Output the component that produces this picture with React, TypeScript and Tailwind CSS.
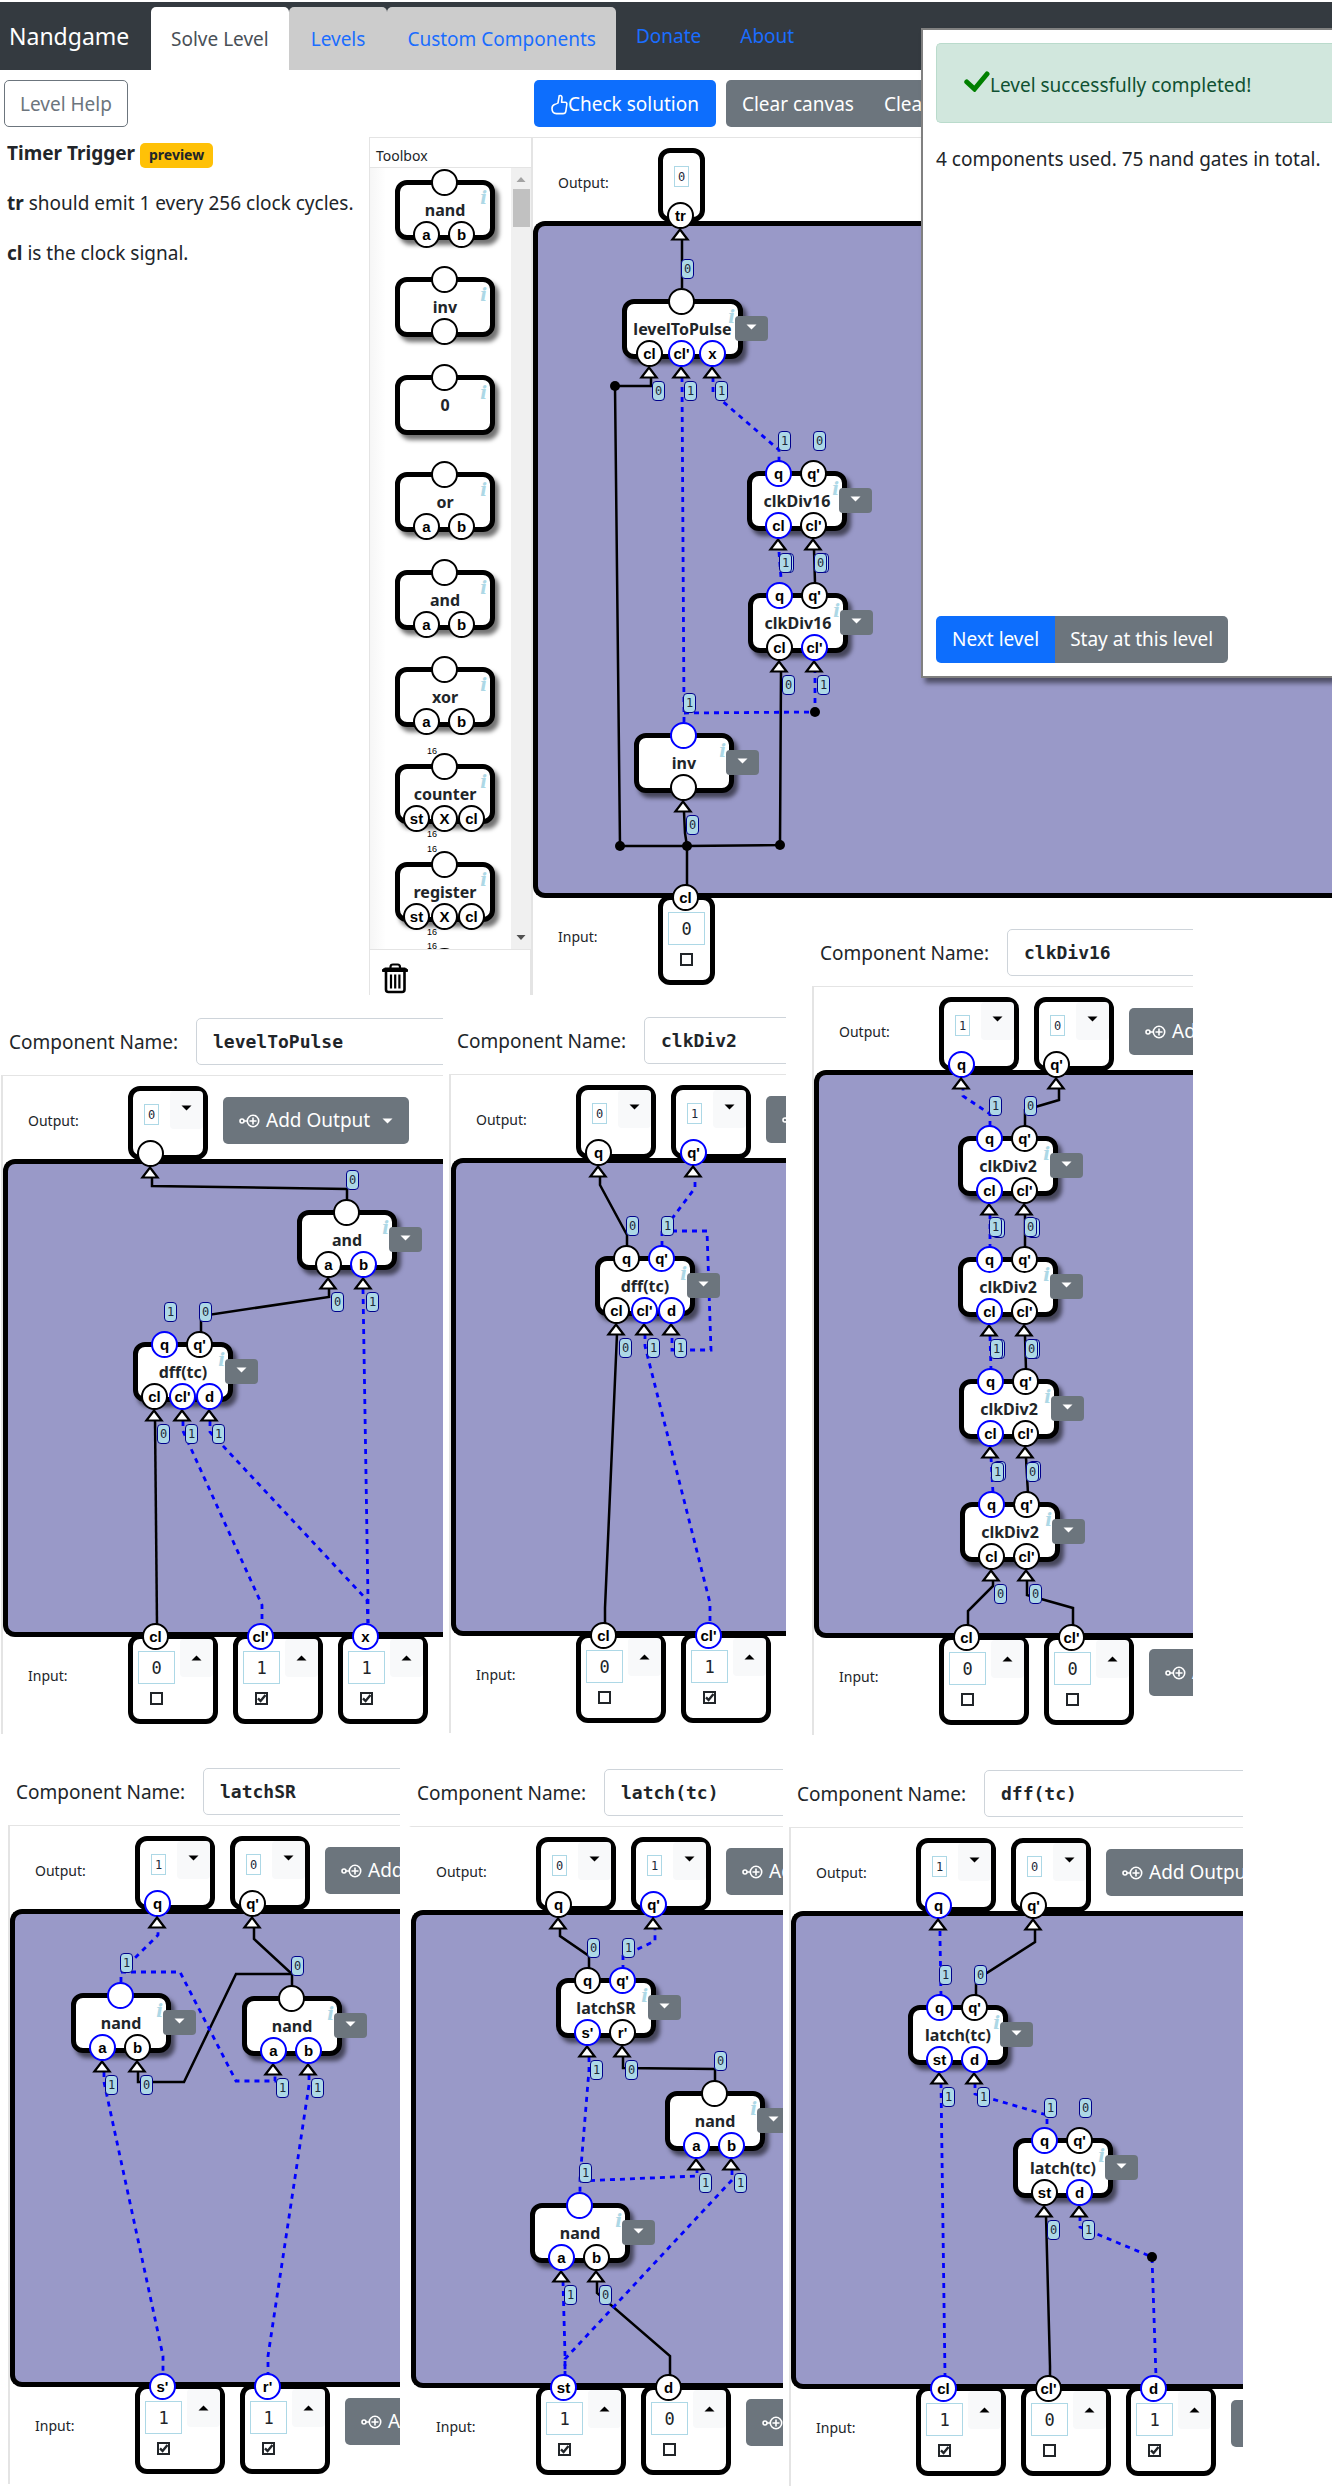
import React from "react";

type Bit = 0 | 1 | null;
type Pin = [label: string, value: Bit];

interface GateData {
  x: number;
  y: number;
  name: string;
  outs: Pin[];
  ins: Pin[];
  wide?: boolean;
}

interface Wire {
  on?: boolean;
  points: string;
}

interface CircuitData {
  gates: GateData[];
  wires: Wire[];
  dots?: [number, number][];
}

interface BoardData extends CircuitData {
  outputs: Pin[];
  inputs: Pin[];
}

const PIN_OFFSETS: Record<number, number[]> = {
  1: [49],
  2: [31, 66],
  3: [21, 49, 76],
};
const WIDE_OFFSETS: Record<number, number[]> = { 1: [59], 3: [27, 59, 90] };

function Caret({ up = false, light = false }: { up?: boolean; light?: boolean }) {
  return (
    <svg width="11" height="6" viewBox="0 0 11 6" aria-hidden="true" className={light ? "text-white" : "text-black"}>
      <path d={up ? "M0.5 5.5H10.5L5.5 0.5Z" : "M0.5 0.5H10.5L5.5 5.5Z"} fill="currentColor" />
    </svg>
  );
}

function PinCircle({ label, on }: { label: string; on: boolean }) {
  return (
    <span
      className={
        "flex size-[27px] items-center justify-center rounded-full border-2 bg-white font-['Liberation_Sans',sans-serif] text-[15px] leading-none font-bold text-black " +
        (on ? "border-[#0000ff]" : "border-black")
      }
    >
      {label}
    </span>
  );
}

function Arrow() {
  return (
    <svg width="20" height="13" viewBox="0 0 20 13" aria-hidden="true">
      <path d="M10 1.5L17.6 11.5H2.4Z" fill="white" stroke="black" strokeWidth="2.2" />
    </svg>
  );
}

function Badge({ value }: { value: Bit }) {
  return (
    <span className="flex h-5 w-[13px] items-center justify-center rounded-[4px] border border-[#00008b] bg-[#add8e6] font-['DejaVu_Sans_Mono',monospace] text-[12px] leading-none text-gray-800">
      {value}
    </span>
  );
}

function Gate({ gate, menu = true, bus = false }: { gate: Omit<GateData, "x" | "y">; menu?: boolean; bus?: boolean }) {
  const table = gate.wide ? WIDE_OFFSETS : PIN_OFFSETS;
  return (
    <div className={"relative h-[60px] shrink-0 " + (gate.wide ? "w-[121px]" : "w-[100px]")}>
      <div className="flex h-full items-center justify-center rounded-[12px] border-[5px] border-black bg-white text-[16px] leading-none font-bold text-[#212529] shadow-[4px_5px_4px_rgba(0,0,0,0.55)]">
        {gate.name}
      </div>
      <span className="absolute top-[9px] right-[8px] font-['DejaVu_Serif',serif] text-[18px] leading-none font-bold text-[#add8e6] italic">
        i
      </span>
      {bus && (
        <>
          <span className="absolute -top-[18px] left-[32px] font-['Liberation_Sans',sans-serif] text-[9px] leading-[10px] text-black">16</span>
          <span className="absolute top-[65px] left-[32px] font-['Liberation_Sans',sans-serif] text-[9px] leading-[10px] text-black">16</span>
        </>
      )}
      {gate.outs.map(([label, value], i) => {
        const cx = table[gate.outs.length][i];
        return (
          <React.Fragment key={"o" + i}>
            <span className="absolute -top-[11px]" style={{ left: cx - 13 }}>
              <PinCircle label={label} on={value === 1} />
            </span>
            {value !== null && (
              <span className="absolute -top-[40px]" style={{ left: cx }}>
                <Badge value={value} />
              </span>
            )}
          </React.Fragment>
        );
      })}
      {gate.ins.map(([label, value], i) => {
        const cx = table[gate.ins.length][i];
        return (
          <React.Fragment key={"i" + i}>
            {value !== null && (
              <>
                <span className="absolute top-[67px]" style={{ left: cx - 10 }}>
                  <Arrow />
                </span>
                <span className="absolute top-[82px]" style={{ left: cx + 3 }}>
                  <Badge value={value} />
                </span>
              </>
            )}
            <span className="absolute top-[41px]" style={{ left: cx - 13 }}>
              <PinCircle label={label} on={value === 1} />
            </span>
          </React.Fragment>
        );
      })}
      {menu && (
        <button
          type="button"
          aria-label={gate.name + " menu"}
          className="absolute top-[17px] -right-[25px] flex h-[25px] w-[33px] items-center justify-center rounded-[4px] bg-[#6c757d] pb-1"
        >
          <Caret light />
        </button>
      )}
    </div>
  );
}

function Circuit({ circuit, height }: { circuit: CircuitData; height: string }) {
  return (
    <div className={"relative rounded-l-[12px] border-[5px] border-r-0 border-black bg-[#9999c8] " + height}>
      <div className="absolute -inset-[5px]">
        <svg className="absolute inset-0 h-full w-full overflow-visible" aria-hidden="true">
          {circuit.wires.map((w) => (
            <polyline
              key={w.points}
              points={w.points}
              fill="none"
              stroke={w.on ? "#0000ff" : "#000000"}
              strokeWidth={w.on ? 2.8 : 2.5}
              strokeDasharray={w.on ? "5 5" : undefined}
            />
          ))}
          {circuit.dots?.map(([cx, cy]) => (
            <circle key={cx + "-" + cy} cx={cx} cy={cy} r="5" fill="#000000" />
          ))}
        </svg>
        {circuit.gates.map((g) => (
          <div key={g.name + g.x + "-" + g.y} className="absolute" style={{ left: g.x, top: g.y }}>
            <Gate gate={g} />
          </div>
        ))}
      </div>
    </div>
  );
}

function AddButton({ text }: { text: string }) {
  return (
    <button
      type="button"
      className="flex h-[47px] shrink-0 items-center rounded-[5px] bg-[#6c757d] px-4 text-[19px] leading-none whitespace-nowrap text-white"
    >
      <svg width="21" height="14" viewBox="0 0 21 14" fill="none" stroke="currentColor" strokeWidth="1.6" aria-hidden="true" className="mr-[6px]">
        <circle cx="3" cy="7" r="2" />
        <path d="M5 7H8.500M14 3.500V10.500M10.500 7H17.500" />
        <circle cx="14" cy="7" r="5.700" />
      </svg>
      {text}
      <span className="ml-3">
        <Caret light />
      </span>
    </button>
  );
}

function OutputBox({ pin, menu }: { pin: Pin; menu: boolean }) {
  const [label, value] = pin;
  return (
    <div
      className={"relative flex h-[74px] shrink-0 items-start rounded-[12px] border-[5px] border-black bg-white " + (menu ? "w-20" : "w-[47px]")}
    >
      <output className="mt-[13px] ml-[11px] flex h-[21px] w-[15px] items-center justify-center border border-[#add8e6] font-['DejaVu_Sans_Mono',monospace] text-[12px] leading-none text-gray-800">
        {value}
      </output>
      {menu && (
        <button type="button" aria-label={"Output " + label + " menu"} className="ml-[11px] flex h-[38px] w-[33px] items-center justify-center rounded-[4px] bg-[#f8f9fa] pb-1">
          <Caret />
        </button>
      )}
      <span className="absolute top-[49px] left-[4px]">
        <PinCircle label={label} on={value === 1} />
      </span>
      <span className="absolute top-[75px] left-[7px]">
        <Arrow />
      </span>
    </div>
  );
}

function InputBox({ pin, menu }: { pin: Pin; menu: boolean }) {
  const [label, value] = pin;
  return (
    <div
      className={"relative flex h-[90px] shrink-0 items-start rounded-[12px] border-[5px] border-black bg-white " + (menu ? "w-[90px]" : "w-[57px]")}
    >
      <div className="ml-[5px] flex w-[37px] flex-col items-center pt-[12px]">
        <input
          aria-label={"Input " + label + " value"}
          defaultValue={String(value)}
          className="h-[33px] w-full border border-[#add8e6] bg-white text-center font-['DejaVu_Sans_Mono',monospace] text-[17px] leading-none text-[#212529]"
        />
        <label className="relative mt-2 size-[13px]">
          <input
            type="checkbox"
            defaultChecked={value === 1}
            aria-label={"Toggle input " + label}
            className="peer block size-[13px] appearance-none border-2 border-[#212529] bg-white"
          />
          <svg viewBox="0 0 13 13" className="pointer-events-none absolute inset-0 hidden size-[13px] peer-checked:block" aria-hidden="true">
            <path d="M3 6.300L5.600 9L10.500 3" fill="none" stroke="#212529" strokeWidth="2.400" />
          </svg>
        </label>
      </div>
      {menu && (
        <button type="button" aria-label={"Input " + label + " menu"} className="ml-[5px] flex h-[38px] w-[33px] items-center justify-center rounded-[4px] bg-[#f8f9fa]">
          <Caret up />
        </button>
      )}
      <span className="absolute -top-[16px] left-[9px]">
        <PinCircle label={label} on={value === 1} />
      </span>
    </div>
  );
}

function Board({ board, height, editable = true, edge = true }: { board: BoardData; height: string; editable?: boolean; edge?: boolean }) {
  return (
    <div className={"overflow-hidden border-t border-l-2 border-t-[#e4e4e4] " + (edge ? "border-l-[#e4e4e4]" : "border-l-white")}>
      <div className="relative z-10 flex h-[83px] items-start pt-[10px]">
        <span className="mt-[25px] w-[125px] shrink-0 pl-[25px] text-[14px] leading-5">Output:</span>
        <div className="flex gap-[15px]">
          {board.outputs.map((p, i) => (
            <OutputBox key={i} pin={p} menu={editable} />
          ))}
          {editable && (
            <div className="mt-[11px]">
              <AddButton text="Add Output" />
            </div>
          )}
        </div>
      </div>
      <Circuit circuit={board} height={height} />
      <div className="relative z-10 -mt-[3px] flex h-[100px] items-start">
        <span className="mt-[32px] w-[125px] shrink-0 pl-[25px] text-[14px] leading-5">Input:</span>
        <div className="flex gap-[15px]">
          {board.inputs.map((p, i) => (
            <InputBox key={i} pin={p} menu={editable} />
          ))}
          {editable && (
            <div className="mt-[14px]">
              <AddButton text="Add Input" />
            </div>
          )}
        </div>
      </div>
    </div>
  );
}

function ComponentCard({
  name,
  board,
  height = "h-[478px]",
  edge,
  className,
}: {
  name: string;
  board: BoardData;
  height?: string;
  edge?: boolean;
  className: string;
}) {
  return (
    <section className={"min-w-0 overflow-hidden pt-px " + className}>
      <div className="mb-[10px] flex h-[47px] items-center">
        <label htmlFor={name} className="w-[195px] shrink-0 pt-px pl-2 text-[19px] whitespace-nowrap">
          Component Name:
        </label>
        <input
          id={name}
          defaultValue={name}
          className="h-[47px] w-[400px] shrink-0 rounded-[5px] border border-[#ced4da] bg-white px-4 font-['DejaVu_Sans_Mono',monospace] text-[18px] font-bold text-[#212529]"
        />
      </div>
      <Board board={board} height={height} edge={edge} />
    </section>
  );
}

const timerBoard: BoardData = {
  outputs: [["tr", 0]],
  inputs: [["cl", 0]],
  gates: [
    { x: 89, y: 78, name: "levelToPulse", wide: true, outs: [["", 0]], ins: [["cl", 0], ["cl'", 1], ["x", 1]] },
    { x: 214, y: 250, name: "clkDiv16", outs: [["q", 1], ["q'", 0]], ins: [["cl", 1], ["cl'", 0]] },
    { x: 215, y: 372, name: "clkDiv16", outs: [["q", 1], ["q'", 0]], ins: [["cl", 0], ["cl'", 1]] },
    { x: 101, y: 512, name: "inv", outs: [["", 1]], ins: [["", 0]] },
  ],
  wires: [
    { points: "149,18 149,67" },
    { points: "118,155 118,165 82,165 87,625 154,625 247,624 248,451" },
    { points: "151,591 152,612 154,625 154,664" },
    { points: "281,328 282,362" },
    { on: true, points: "149,156 151,492 151,502" },
    { on: true, points: "180,156 180,172 246,229 246,243" },
    { on: true, points: "246,331 248,357" },
    { on: true, points: "151,492 282,491 282,451" },
  ],
  dots: [[82, 165], [87, 625], [154, 625], [247, 624], [282, 491]],
};

const levelToPulse: BoardData = {
  outputs: [["", 0]],
  inputs: [["cl", 0], ["cl'", 1], ["x", 1]],
  gates: [
    { x: 294, y: 51, name: "and", outs: [["", 0]], ins: [["a", 0], ["b", 1]] },
    { x: 130, y: 183, name: "dff(tc)", outs: [["q", 1], ["q'", 0]], ins: [["cl", 0], ["cl'", 1], ["d", 1]] },
  ],
  wires: [
    { points: "149,17 149,27 344,30 344,42" },
    { points: "198,177 198,157 326,138 326,128" },
    { points: "152,260 154,466" },
    { on: true, points: "180,262 180,272 259,446 259,464" },
    { on: true, points: "207,262 207,273 364,441 365,464" },
    { on: true, points: "360,130 365,441 365,464" },
  ],
};

const clkDiv2: BoardData = {
  outputs: [["q", 0], ["q'", 1]],
  inputs: [["cl", 0], ["cl'", 1]],
  gates: [{ x: 144, y: 98, name: "dff(tc)", outs: [["q", 0], ["q'", 1]], ins: [["cl", 0], ["cl'", 1], ["d", 1]] }],
  wires: [
    { points: "176,89 176,77 149,27 149,17" },
    { points: "166,176 154,450 154,465" },
    { on: true, points: "211,88 211,74 244,30 244,17" },
    { on: true, points: "211,73 256,73 260,192 221,192 221,177" },
    { on: true, points: "194,176 194,188 259,445 259,465" },
  ],
};

const div2 = (x: number, y: number, low: Bit): GateData => ({
  x,
  y,
  name: "clkDiv2",
  outs: [["q", 1], ["q'", 0]],
  ins: [["cl", low], ["cl'", 0]],
});

const clkDiv16: BoardData = {
  outputs: [["q", 1], ["q'", 0]],
  inputs: [["cl", 0], ["cl'", 0]],
  gates: [div2(144, 66, 1), div2(144, 187, 1), div2(145, 309, 1), div2(146, 432, 0)],
  wires: [
    { on: true, points: "176,56 176,44 149,26 149,17" },
    { points: "211,56 211,40 245,30 245,17" },
    { on: true, points: "176,144 176,178" },
    { points: "211,144 211,178" },
    { on: true, points: "176,266 177,300" },
    { points: "211,266 212,300" },
    { on: true, points: "177,387 179,423" },
    { points: "212,388 214,424" },
    { points: "179,510 179,516 154,541 154,555" },
    { points: "213,510 213,525 259,538 259,555" },
  ],
};

const latchSR: BoardData = {
  outputs: [["q", 1], ["q'", 0]],
  inputs: [["s'", 1], ["r'", 1]],
  gates: [
    { x: 61, y: 84, name: "nand", outs: [["", 1]], ins: [["a", 1], ["b", 0]] },
    { x: 232, y: 87, name: "nand", outs: [["", 0]], ins: [["a", 1], ["b", 1]] },
  ],
  wires: [
    { points: "282,78 282,65 244,30 244,17" },
    { points: "282,65 226,65 174,173 128,173 128,163" },
    { on: true, points: "111,73 111,63 148,26 148,17" },
    { on: true, points: "111,63 170,63 226,172 265,172 265,165" },
    { on: true, points: "94,163 94,173 153,447 153,465" },
    { on: true, points: "299,166 299,176 258,447 258,465" },
  ],
};

const latchTc: BoardData = {
  outputs: [["q", 0], ["q'", 1]],
  inputs: [["st", 1], ["d", 0]],
  gates: [
    { x: 145, y: 68, name: "latchSR", outs: [["q", 0], ["q'", 1]], ins: [["s'", 1], ["r'", 0]] },
    { x: 254, y: 181, name: "nand", outs: [["", 0]], ins: [["a", 1], ["b", 1]] },
    { x: 119, y: 293, name: "nand", outs: [["", 1]], ins: [["a", 1], ["b", 0]] },
  ],
  wires: [
    { points: "178,60 178,46 149,26 149,17" },
    { points: "212,146 212,158 304,159 304,173" },
    { points: "186,371 186,383 259,446 259,466" },
    { on: true, points: "212,60 212,46 244,31 244,17" },
    { on: true, points: "178,147 178,160 169,269 169,284" },
    { on: true, points: "169,271 286,266 286,260" },
    { on: true, points: "152,371 154,445 154,466" },
    { on: true, points: "321,260 321,270 154,449 154,466" },
  ],
};

const dffTc: BoardData = {
  outputs: [["q", 1], ["q'", 0]],
  inputs: [["cl", 1], ["cl'", 0], ["d", 1]],
  gates: [
    { x: 117, y: 94, name: "latch(tc)", outs: [["q", 1], ["q'", 0]], ins: [["st", 1], ["d", 1]] },
    { x: 222, y: 227, name: "latch(tc)", outs: [["q", 1], ["q'", 0]], ins: [["st", 0], ["d", 1]] },
  ],
  wires: [
    { points: "185,85 185,69 244,31 244,17" },
    { points: "255,305 259,455 259,466" },
    { on: true, points: "150,85 149,27 149,17" },
    { on: true, points: "150,172 154,465" },
    { on: true, points: "184,172 184,183 256,204 256,218" },
    { on: true, points: "289,305 289,316 361,346 365,466" },
  ],
  dots: [[361, 346]],
};

const AB: Pin[] = [["a", null], ["b", null]];
const STX: Pin[] = [["st", null], ["X", null], ["cl", null]];
const BLANK: Pin[] = [["", null]];

const tools: { name: string; ins: Pin[]; bus?: boolean }[] = [
  { name: "nand", ins: AB },
  { name: "inv", ins: BLANK },
  { name: "0", ins: [] },
  { name: "or", ins: AB },
  { name: "and", ins: AB },
  { name: "xor", ins: AB },
  { name: "counter", ins: STX, bus: true },
  { name: "register", ins: STX, bus: true },
  { name: "ram", ins: STX, bus: true },
];

function Toolbox() {
  return (
    <aside className="flex w-[162px] shrink-0 flex-col border-t border-l border-[#e4e4e4]">
      <h2 className="h-[29px] pt-2 pl-[6px] text-[14px] leading-5">Toolbox</h2>
      <div className="flex h-[782px] overflow-hidden border-t border-[#e4e4e4]">
        <div className="flex h-[851px] flex-1 flex-col justify-between bg-[linear-gradient(to_right,#f6f6f6,#ffffff_16px)] pt-[12px] pl-[25px]">
          {tools.map((t) => (
            <Gate key={t.name} gate={{ name: t.name, outs: BLANK, ins: t.ins }} menu={false} bus={t.bus} />
          ))}
        </div>
        <div className="flex w-5 shrink-0 flex-col items-center justify-between bg-[#f0f0f0]">
          <div className="flex flex-col items-center">
            <svg width="10" height="21" viewBox="0 0 10 21" aria-hidden="true">
              <path d="M0.500 14H9.500L5 9Z" fill="#a3a3a3" />
            </svg>
            <div className="h-[38px] w-[17px] bg-[#c1c1c1]" />
          </div>
          <svg width="10" height="19" viewBox="0 0 10 19" aria-hidden="true">
            <path d="M0.500 5H9.500L5 10Z" fill="#505050" />
          </svg>
        </div>
      </div>
      <div className="flex-1 border-t border-r border-[#e4e4e4] pt-[13px] pl-[12px]">
        <button type="button" aria-label="Trash" className="block">
          <svg width="26" height="31" viewBox="0 0 26 31" fill="none" stroke="black" aria-hidden="true">
            <path d="M8.500 6V4Q8.500 1.500 11 1.500H15.500Q18 1.500 18 4V6" strokeWidth="2.200" />
            <path d="M0.500 8.500V6.500L3 5H23L25.500 6.500V8.500Z" fill="black" />
            <path d="M4 8V26.500Q4 29 6.500 29H20Q22.500 29 22.500 26.500V8" strokeWidth="2.600" />
            <path d="M9 11.500V25.500M13.200 11.500V25.500M17.400 11.500V25.500" strokeWidth="2.200" />
          </svg>
        </button>
      </div>
    </aside>
  );
}

function Header() {
  return (
    <header className="mt-[2px] flex h-[68px] items-stretch bg-[#343a40] text-[19px]">
      <a href="#home" className="flex w-[151px] items-center pt-px pl-[9px] text-[23px] text-white">
        Nandgame
      </a>
      <nav className="flex">
        <div className="mt-[5px] flex">
          <a href="#solve" className="flex items-center rounded-t-[5px] bg-white px-5 pt-px text-[#495057]">
            Solve Level
          </a>
          <a href="#levels" className="flex items-center rounded-t-[5px] bg-[#cccccc] px-[22px] pt-px text-[#1a6dff]">
            Levels
          </a>
          <a href="#custom" className="flex items-center rounded-t-[5px] bg-[#cccccc] px-5 pt-px text-[#1a6dff]">
            Custom Components
          </a>
        </div>
        <a href="#donate" className="flex items-center pt-px pr-5 pl-5 text-[#1a6dff]">
          Donate
        </a>
        <a href="#about" className="flex items-center px-[19px] pt-px text-[#1a6dff]">
          About
        </a>
      </nav>
    </header>
  );
}

function Toolbar() {
  return (
    <div className="flex h-[67px] items-start pt-[10px] text-[19px]">
      <div className="w-[534px] pl-1">
        <button type="button" className="h-[47px] rounded-[5px] border border-[#6c757d] px-[15px] pt-px text-[#6c757d]">
          Level Help
        </button>
      </div>
      <div className="flex gap-[10px] whitespace-nowrap text-white">
        <button type="button" className="flex h-[47px] items-center rounded-[5px] bg-[#0d6efd] px-[17px] pt-px">
          <svg width="17" height="21" viewBox="0 0 17 21" fill="none" stroke="currentColor" strokeWidth="1.600" strokeLinejoin="round" aria-hidden="true">
            <path d="M7 9L8.200 1.800Q11 0.800 11 3.800L10.600 8.200H14.200Q16.200 8.400 15.800 10.500L14.800 17.300Q14.400 19.600 12 19.600H5.500Q1 19.400 1 14.500Q1 11.500 3.500 10.500Q6 9.800 7 9Z" />
          </svg>
          Check solution
        </button>
        <div className="flex">
          <button type="button" className="h-[47px] rounded-l-[5px] bg-[#6c757d] pt-px pr-[14px] pl-4">
            Clear canvas
          </button>
          <button type="button" className="h-[47px] rounded-r-[5px] bg-[#6c757d] px-4 pt-px">
            Clear
          </button>
        </div>
      </div>
    </div>
  );
}

function ResultDialog() {
  return (
    <div
      role="dialog"
      aria-label="Level result"
      className="absolute top-[27px] right-0 z-30 flex min-h-[650px] w-[411px] flex-col border-2 border-r-0 border-[#808080] bg-white pt-[13px] pb-[13px] pl-[13px] text-[19px] shadow-[4px_5px_5px_rgba(0,0,0,0.5)]"
    >
      <div className="flex h-20 items-center rounded-l-[5px] border border-r-0 border-[#badbcc] bg-[#d1e7dd] pt-[5px] pl-[27px] text-[#0f5132]">
        <svg width="26" height="21" viewBox="0 0 26 21" aria-hidden="true" className="mb-2">
          <path d="M2.800 11L10.500 18L23 3" fill="none" stroke="#008000" strokeWidth="5" strokeLinecap="round" strokeLinejoin="miter" />
        </svg>
        Level successfully completed!
      </div>
      <p className="mt-[22px] whitespace-nowrap">4 components used. 75 nand gates in total.</p>
      <div className="mt-auto flex text-white">
        <button type="button" className="h-[47px] rounded-l-[5px] bg-[#0d6efd] px-4">
          Next level
        </button>
        <button type="button" className="h-[47px] rounded-r-[5px] bg-[#6c757d] px-[15px]">
          Stay at this level
        </button>
      </div>
    </div>
  );
}

export default function App() {
  return (
    <div className="relative overflow-hidden border-t border-white bg-white pb-2 font-['Noto_Sans',sans-serif] text-[#212529]">
      <div className="-mt-px">
        <Header />
      </div>
      <Toolbar />
      <main>
        <div className="flex h-[858px]">
          <article className="flex-none w-[369px] pt-px pl-[7px] text-[19px] leading-[30px]">
            <h1 className="flex items-center gap-[5px] font-bold">
              Timer Trigger
              <span className="mt-1 flex h-[25px] items-center rounded-[5px] bg-[#ffc107] px-[9px] text-[14px] leading-none">preview</span>
            </h1>
            <p className="mt-5 whitespace-nowrap">
              <b>tr</b> should emit 1 every 256 clock cycles.
            </p>
            <p className="mt-5">
              <b>cl</b> is the clock signal.
            </p>
          </article>
          <Toolbox />
          <div className="min-w-0 flex-1">
            <Board board={timerBoard} height="h-[677px]" editable={false} />
          </div>
        </div>
        <div className="relative grid grid-cols-[443fr_343fr_407fr_139fr] items-start">
          <ComponentCard name="levelToPulse" board={levelToPulse} className="mt-[22px] ml-px" />
          <ComponentCard name="clkDiv2" board={clkDiv2} className="mt-[21px] ml-[6px]" />
          <ComponentCard name="clkDiv16" board={clkDiv16} height="h-[568px]" className="-mt-[67px] ml-[26px]" />
        </div>
        <div className="grid grid-cols-[400fr_383fr_460fr_89fr] items-start">
          <ComponentCard name="latchSR" board={latchSR} className="mt-8 ml-2" />
          <ComponentCard name="latch(tc)" board={latchTc} edge={false} className="mt-[33px] ml-[9px]" />
          <ComponentCard name="dff(tc)" board={dffTc} className="mt-[34px] ml-[6px]" />
        </div>
      </main>
      <ResultDialog />
    </div>
  );
}
